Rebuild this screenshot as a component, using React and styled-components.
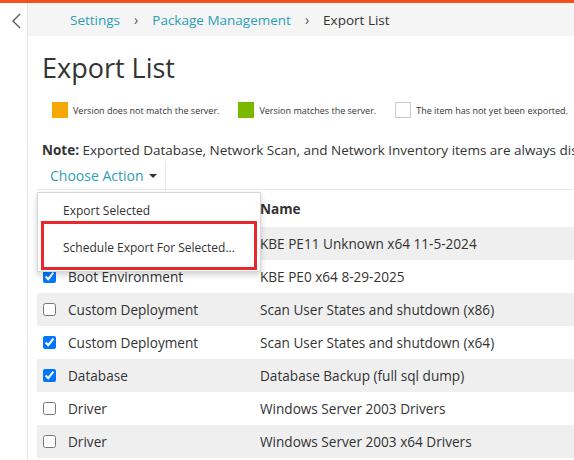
import React from "react";
import styled, { createGlobalStyle } from "styled-components";

const GlobalStyle = createGlobalStyle`
  html, body { margin: 0; padding: 0; background: #fff; }
  body {
    font-family: "Open Sans", "Noto Sans", "Liberation Sans", sans-serif;
    color: #333;
    overflow: hidden;
    width: 574px;
    height: 460px;
  }
  * { box-sizing: border-box; }
`;

const Page = styled.div`
  display: flex;
  flex-direction: column;
  height: 460px;
  overflow: hidden;
`;

const AccentBar = styled.div`
  height: 3px;
  background: #f4511e;
  flex: none;
`;

const Shell = styled.div`
  display: flex;
  flex: 1;
  min-height: 0;
`;

const Sidebar = styled.div`
  width: 28px;
  flex: none;
  border-right: 1px solid #e6e6e6;
  display: flex;
  justify-content: center;
  padding-top: 10px;
  padding-left: 5px;
`;

const Main = styled.div`
  flex: 1;
  min-width: 0;
  display: flex;
  flex-direction: column;
  overflow: hidden;
`;

const Breadcrumb = styled.nav`
  height: 33px;
  background: #f5f5f5;
  display: flex;
  align-items: center;
  padding-left: 42px;
  font-size: 13.5px;
  gap: 14px;
  flex: none;
`;

const Crumb = styled.span`
  color: ${(p) => (p.$current ? "#333" : "#2c9fb7")};
`;

const Sep = styled.span`
  color: #555;
  font-size: 14px;
`;

const Body = styled.div`
  position: relative;
  padding-left: 14px;
  display: flex;
  flex-direction: column;
`;

const Title = styled.h1`
  margin: 14px 0 0 0;
  font-size: 27px;
  font-weight: 400;
  line-height: 36px;
  color: #333;
  white-space: nowrap;
`;

const Legend = styled.div`
  display: flex;
  align-items: center;
  margin-top: 16px;
  padding-left: 10px;
  height: 16px;
  font-size: 9px;
  color: #333;
  white-space: nowrap;
`;

const LegendItem = styled.div`
  display: flex;
  align-items: center;
  gap: 5px;
  margin-right: ${(p) => p.$gap || 0}px;
`;

const Swatch = styled.span`
  width: 16px;
  height: 16px;
  background: ${(p) => p.$color};
  border: ${(p) => (p.$outline ? "1px solid #ccc" : "none")};
  flex: none;
`;

const Note = styled.p`
  margin: 22px 0 0 0;
  font-size: 13.5px;
  line-height: 20px;
  white-space: nowrap;
  color: #333;
`;

const Strong = styled.strong`
  font-weight: 700;
`;

const Toolbar = styled.div`
  display: flex;
  margin-left: -5px;
  margin-top: 3px;
  border-bottom: 1px solid #e8e8e8;
  width: 560px;
`;

const ActionButton = styled.div`
  display: flex;
  align-items: center;
  gap: 5px;
  height: 26px;
  padding: 0 8px 2px 13px;
  color: #2c9fb7;
  font-size: 14px;
  border-right: 1px solid #e8e8e8;
`;

const Caret = styled.span`
  width: 0;
  height: 0;
  border-left: 4px solid transparent;
  border-right: 4px solid transparent;
  border-top: 4px solid #333;
  margin-top: 2px;
`;

const Table = styled.div`
  margin-left: -5px;
  width: 600px;
  display: flex;
  flex-direction: column;
`;

const HeaderRow = styled.div`
  display: grid;
  grid-template-columns: 223px 1fr;
  height: 37px;
  align-items: center;
  font-size: 13.6px;
  font-weight: 700;
  color: #333;
`;

const Row = styled.div`
  display: grid;
  grid-template-columns: 223px 1fr;
  height: 33px;
  align-items: center;
  font-size: 13.6px;
  color: #333;
  background: ${(p) => (p.$shade ? "#efefef" : "#fff")};
  white-space: nowrap;
`;

const TypeCell = styled.label`
  display: flex;
  align-items: center;
  gap: 12px;
  padding-left: 6px;
`;

const Check = styled.input`
  width: 13px;
  height: 13px;
  margin: 0;
  flex: none;
`;

const Menu = styled.div`
  position: absolute;
  left: 9px;
  top: 156px;
  width: 224px;
  height: 80px;
  background: #fff;
  border: 1px solid #d6d6d6;
  box-shadow: 0 3px 6px rgba(0, 0, 0, 0.18);
  padding: 4px 3px 0 3px;
  display: flex;
  flex-direction: column;
  z-index: 5;
`;

const MenuItem = styled.div`
  height: ${(p) => (p.$highlight ? 49 : 24)}px;
  display: flex;
  align-items: center;
  padding-left: ${(p) => (p.$highlight ? 19 : 22)}px;
  padding-top: ${(p) => (p.$highlight ? 3 : 2)}px;
  font-size: 12px;
  color: #333;
  border: ${(p) => (p.$highlight ? "3px solid #e8262b" : "none")};
  white-space: nowrap;
`;

const rows = [
  { type: "Boot Environment", name: "KBE PE11 Unknown x64 11-5-2024", checked: true },
  { type: "Boot Environment", name: "KBE PE0 x64 8-29-2025", checked: true },
  { type: "Custom Deployment", name: "Scan User States and shutdown (x86)", checked: false },
  { type: "Custom Deployment", name: "Scan User States and shutdown (x64)", checked: true },
  { type: "Database", name: "Database Backup (full sql dump)", checked: true },
  { type: "Driver", name: "Windows Server 2003 Drivers", checked: false },
  { type: "Driver", name: "Windows Server 2003 x64 Drivers", checked: false },
];

function Chevron() {
  return (
    <svg width="9" height="16" viewBox="0 0 9 16" fill="none">
      <path d="M8 1 L1 8 L8 15" stroke="#555" strokeWidth="1.3" />
    </svg>
  );
}

export default function App() {
  return (
    <Page>
      <GlobalStyle />
      <AccentBar />
      <Shell>
        <Sidebar>
          <Chevron />
        </Sidebar>
        <Main>
          <Breadcrumb>
            <Crumb>Settings</Crumb>
            <Sep>›</Sep>
            <Crumb>Package Management</Crumb>
            <Sep>›</Sep>
            <Crumb $current>Export List</Crumb>
          </Breadcrumb>
          <Body>
            <Title>Export List</Title>
            <Legend>
              <LegendItem $gap={19}>
                <Swatch $color="#f5a800" />
                Version does not match the server.
              </LegendItem>
              <LegendItem $gap={19}>
                <Swatch $color="#7ab800" />
                Version matches the server.
              </LegendItem>
              <LegendItem>
                <Swatch $color="#fff" $outline />
                The item has not yet been exported.
              </LegendItem>
            </Legend>
            <Note>
              <Strong>Note:</Strong> Exported Database, Network Scan, and Network Inventory items are always displayed.
            </Note>
            <Toolbar>
              <ActionButton>
                Choose Action <Caret />
              </ActionButton>
            </Toolbar>
            <Table>
              <HeaderRow>
                <span />
                <span>Name</span>
              </HeaderRow>
              {rows.map((r, i) => (
                <Row key={i} $shade={i % 2 === 0}>
                  <TypeCell>
                    <Check type="checkbox" defaultChecked={r.checked} />
                    {r.type}
                  </TypeCell>
                  <span>{r.name}</span>
                </Row>
              ))}
            </Table>
            <Menu>
              <MenuItem>Export Selected</MenuItem>
              <MenuItem $highlight>Schedule Export For Selected...</MenuItem>
            </Menu>
          </Body>
        </Main>
      </Shell>
    </Page>
  );
}
